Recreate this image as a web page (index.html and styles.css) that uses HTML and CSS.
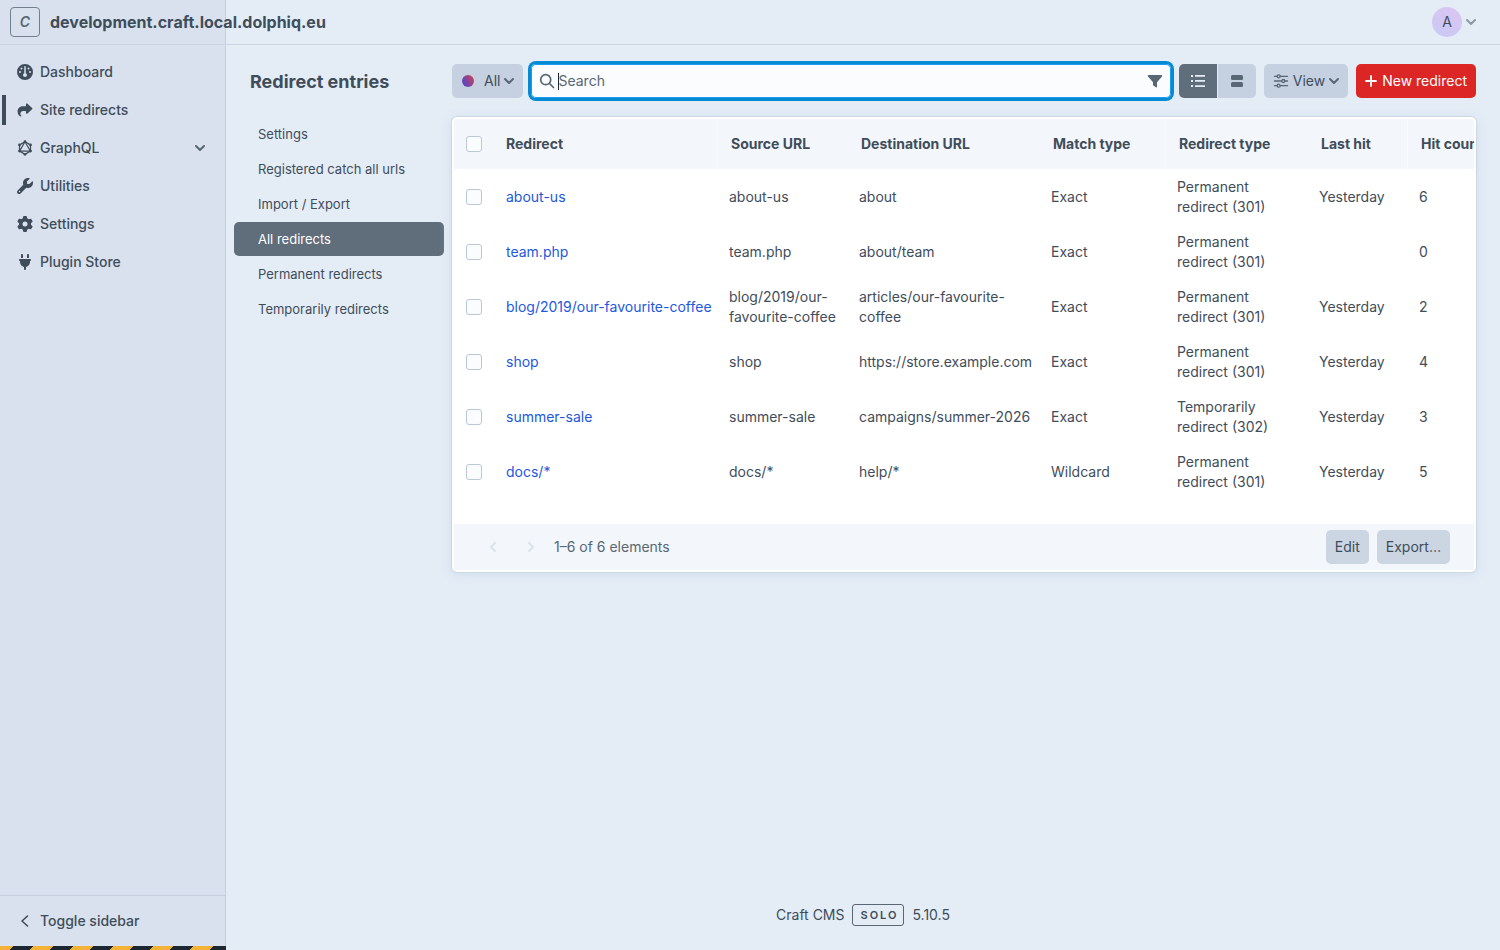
FILE: index.html
```html
<!DOCTYPE html>
<html lang="en">
<head>
<meta charset="utf-8">
<meta name="viewport" content="width=device-width, initial-scale=1">
<title>Redirect entries</title>
<link rel="stylesheet" href="styles.css">
</head>
<body>
<svg class="sprite" aria-hidden="true">
  <symbol id="chevron" viewBox="0 0 10 10"><path d="M1 3l4 4 4-4" fill="none" stroke="currentColor" stroke-width="2" stroke-linecap="round" stroke-linejoin="round"/></symbol>
</svg>
<div class="app">
  <header class="topbar">
    <a class="site" href="#"><span class="site-icon">C</span><span class="site-name">development.craft.local.dolphiq.eu</span></a>
    <button class="account" type="button" aria-label="My account"><span class="avatar">A</span><svg class="chev"><use href="#chevron"/></svg></button>
  </header>

  <div class="sidebar">
    <nav class="nav" aria-label="Primary">
      <a class="nav-item" href="#"><svg class="nav-icon" viewBox="0 0 512 512"><path d="M0 256a256 256 0 1 1 512 0A256 256 0 1 1 0 256zm320 96c0-26.900-16.500-49.900-40-59.300V88c0-13.300-10.700-24-24-24s-24 10.700-24 24V292.700c-23.500 9.500-40 32.500-40 59.300c0 35.300 28.700 64 64 64s64-28.700 64-64zM144 176a32 32 0 1 0 0-64 32 32 0 1 0 0 64zm-16 80a32 32 0 1 0 -64 0 32 32 0 1 0 64 0zm288 32a32 32 0 1 0 0-64 32 32 0 1 0 0 64zM400 144a32 32 0 1 0 -64 0 32 32 0 1 0 64 0z"/></svg>Dashboard</a>
      <a class="nav-item current" href="#" aria-current="page"><svg class="nav-icon" viewBox="-18 -20 548 552"><path d="M307 34.800c-11.500 5.100-19 16.600-19 29.200v64H176C78.800 128 0 206.800 0 304C0 417.300 81.500 467.900 100.200 478.100c2.500 1.400 5.300 1.900 8.100 1.900c10.900 0 19.700-8.900 19.700-19.700c0-7.500-4.300-14.400-9.800-19.500C108.800 431.900 96 414.400 96 384c0-53 43-96 96-96h96v64c0 12.600 7.400 24.100 19 29.200s25 3 34.400-5.400l160-144c6.700-6.100 10.600-14.700 10.600-23.800s-3.800-17.700-10.600-23.800l-160-144c-9.400-8.500-22.900-10.600-34.400-5.400z"/></svg>Site redirects</a>
      <a class="nav-item" href="#"><svg class="nav-icon" viewBox="0 0 16 16"><g fill="none" stroke="currentColor" stroke-width="1.200"><path d="M8 1.700l5.500 3.200v6.200L8 14.300 2.500 11.100V4.900z"/><path d="M8 1.700l5.500 9.400h-11z"/></g><circle cx="8" cy="1.700" r="1.400"/><circle cx="13.500" cy="4.900" r="1.400"/><circle cx="13.500" cy="11.100" r="1.400"/><circle cx="8" cy="14.300" r="1.400"/><circle cx="2.500" cy="11.100" r="1.400"/><circle cx="2.500" cy="4.900" r="1.400"/></svg>GraphQL<svg class="chev"><use href="#chevron"/></svg></a>
      <a class="nav-item" href="#"><svg class="nav-icon" viewBox="0 0 512 512"><path d="M352 320c88.400 0 160-71.600 160-160c0-15.300-2.200-30.100-6.200-44.200c-3.100-10.800-16.400-13.200-24.300-5.300l-76.800 76.800c-3 3-7.100 4.700-11.300 4.700H336c-8.800 0-16-7.200-16-16V118.600c0-4.200 1.700-8.300 4.700-11.300l76.800-76.800c7.900-7.900 5.400-21.200-5.300-24.300C382.100 2.200 367.300 0 352 0C263.600 0 192 71.600 192 160c0 19.100 3.400 37.500 9.500 54.500L19.900 396.100C7.200 408.800 0 426.100 0 444.100C0 481.600 30.400 512 67.900 512c18 0 35.300-7.200 48-19.900L297.500 310.500c17 6.200 35.400 9.500 54.500 9.500zM80 408a24 24 0 1 1 0 48 24 24 0 1 1 0-48z"/></svg>Utilities</a>
      <a class="nav-item" href="#"><svg class="nav-icon" viewBox="0 0 512 512"><path d="M495.900 166.600c3.200 8.700 .5 18.400-6.400 24.600l-43.300 39.400c1.100 8.300 1.700 16.800 1.700 25.400s-.6 17.100-1.700 25.400l43.300 39.400c6.900 6.200 9.600 15.900 6.400 24.600c-4.400 11.900-9.700 23.300-15.800 34.300l-4.700 8.100c-6.600 11-14 21.400-22.100 31.200c-5.900 7.200-15.700 9.600-24.500 6.800l-55.700-17.700c-13.400 10.300-28.200 18.900-44 25.400l-12.500 57.100c-2 9.100-9 16.300-18.200 17.800c-13.800 2.300-28 3.500-42.500 3.500s-28.700-1.200-42.500-3.500c-9.200-1.500-16.200-8.700-18.200-17.800l-12.500-57.100c-15.800-6.500-30.600-15.100-44-25.400L83.100 425.900c-8.800 2.800-18.600 .3-24.500-6.800c-8.100-9.800-15.500-20.200-22.100-31.200l-4.700-8.100c-6.100-11-11.400-22.400-15.800-34.300c-3.200-8.700-.5-18.400 6.400-24.600l43.300-39.400C64.600 273.100 64 264.600 64 256s.6-17.100 1.700-25.400L22.400 191.200c-6.900-6.200-9.600-15.900-6.400-24.600c4.400-11.900 9.700-23.300 15.800-34.300l4.700-8.100c6.600-11 14-21.400 22.100-31.200c5.900-7.200 15.700-9.600 24.500-6.800l55.700 17.700c13.400-10.300 28.200-18.900 44-25.400l12.500-57.100c2-9.100 9-16.300 18.200-17.800C227.300 1.200 241.500 0 256 0s28.700 1.200 42.500 3.500c9.200 1.500 16.200 8.700 18.200 17.800l12.500 57.100c15.800 6.500 30.600 15.100 44 25.400l55.700-17.700c8.800-2.800 18.600-.3 24.500 6.800c8.100 9.800 15.500 20.200 22.100 31.200l4.700 8.100c6.100 11 11.400 22.400 15.800 34.300zM256 336a80 80 0 1 0 0-160 80 80 0 1 0 0 160z"/></svg>Settings</a>
      <a class="nav-item" href="#"><svg class="nav-icon" viewBox="-64 0 512 512"><path d="M96 0C78.300 0 64 14.300 64 32v96h64V32c0-17.700-14.300-32-32-32zM288 0c-17.700 0-32 14.300-32 32v96h64V32c0-17.700-14.300-32-32-32zM32 160c-17.700 0-32 14.300-32 32s14.300 32 32 32v32c0 77.400 55 142 128 156.800V480c0 17.700 14.300 32 32 32s32-14.300 32-32V412.800C297 398 352 333.400 352 256V224c17.700 0 32-14.300 32-32s-14.300-32-32-32H32z"/></svg>Plugin Store</a>
    </nav>
    <button class="toggle" type="button"><svg class="nav-icon" viewBox="0 0 16 16"><path d="M10.500 3L5 8l5.500 5" fill="none" stroke="currentColor" stroke-width="1.600" stroke-linecap="round" stroke-linejoin="round"/></svg>Toggle sidebar</button>
    <div class="dev-stripes"></div>
  </div>

  <div class="page">
    <div class="content">
      <div class="sources">
        <h1 class="title">Redirect entries</h1>
        <nav class="source-list" aria-label="Sources">
          <a class="source" href="#">Settings</a>
          <a class="source" href="#">Registered catch all urls</a>
          <a class="source" href="#">Import / Export</a>
          <a class="source selected" href="#" aria-current="true">All redirects</a>
          <a class="source" href="#">Permanent redirects</a>
          <a class="source" href="#">Temporarily redirects</a>
        </nav>
      </div>

      <main class="main">
        <div class="toolbar">
          <button class="btn status" type="button"><span class="status-dot"></span>All<svg class="chev"><use href="#chevron"/></svg></button>
          <div class="search">
            <svg class="search-icon" viewBox="0 0 16 16"><g fill="none" stroke="currentColor" stroke-width="1.700" stroke-linecap="round"><circle cx="6.700" cy="6.700" r="5"/><path d="M10.500 10.500l4 4"/></g></svg>
            <span class="caret"></span>
            <input class="search-input" type="text" placeholder="Search" aria-label="Search">
            <button class="filter" type="button" aria-label="Filter"><svg viewBox="0 0 16 16"><path d="M1.700 2h12.600c.9 0 1.200.9.700 1.500L10 9.300v4.500c0 .6-.6.9-1.100.5L6.300 12.500A.9.900 0 0 1 6 11.800V9.300L1 3.500C.5 2.900.8 2 1.700 2z"/></svg></button>
          </div>
          <div class="modes">
            <button class="mode active" type="button" aria-label="Display in a table"><svg viewBox="0 0 16 16"><path d="M1 2h2v2H1zM1 7h2v2H1zM1 12h2v2H1zM5 2h10v1.700H5zM5 7.100h10v1.700H5zM5 12.200h10v1.700H5z"/></svg></button>
            <button class="mode" type="button" aria-label="Display as cards"><svg viewBox="0 0 16 16"><rect x="2" y="2" width="12" height="5" rx="1.500"/><rect x="2" y="9" width="12" height="5" rx="1.500"/></svg></button>
          </div>
          <button class="btn view" type="button"><svg class="sliders" viewBox="0 0 16 16"><g fill="none" stroke="currentColor" stroke-width="1.300" stroke-linecap="round"><path d="M1.500 3.300H4M7.400 3.300h7.100M1.500 8h7.100M12 8h2.500M1.500 12.700H4M7.400 12.700h7.100"/><circle cx="5.700" cy="3.300" r="1.500"/><circle cx="10.300" cy="8" r="1.500"/><circle cx="5.700" cy="12.700" r="1.500"/></g></svg>View<svg class="chev"><use href="#chevron"/></svg></button>
          <button class="btn submit" type="button"><svg class="plus" viewBox="0 0 12 12"><path d="M6 1v10M1 6h10" stroke="currentColor" stroke-width="1.800" stroke-linecap="round"/></svg>New redirect</button>
        </div>

        <section class="pane">
          <div class="table-scroll">
            <table class="table">
              <colgroup><col class="c-check"><col class="c-title"><col class="c-source"><col class="c-dest"><col class="c-match"><col class="c-type"><col class="c-last"><col class="c-count"></colgroup>
              <thead>
                <tr><th class="check"><input type="checkbox" aria-label="Select all"></th><th class="first" scope="col">Redirect</th><th class="ruled" scope="col">Source URL</th><th scope="col">Destination URL</th><th scope="col">Match type</th><th class="ruled" scope="col">Redirect type</th><th scope="col">Last hit</th><th class="ruled" scope="col">Hit count</th></tr>
              </thead>
              <tbody>
                <tr><td class="check"><input type="checkbox" aria-label="Select about-us"></td><td><a href="#">about-us</a></td><td>about-us</td><td>about</td><td>Exact</td><td>Permanent redirect (301)</td><td>Yesterday</td><td>6</td></tr>
                <tr><td class="check"><input type="checkbox" aria-label="Select team.php"></td><td><a href="#">team.php</a></td><td>team.php</td><td>about/team</td><td>Exact</td><td>Permanent redirect (301)</td><td></td><td>0</td></tr>
                <tr><td class="check"><input type="checkbox" aria-label="Select blog/2019/our-favourite-coffee"></td><td class="nowrap"><a href="#">blog/2019/our-favourite-coffee</a></td><td>blog/2019/our-favourite-coffee</td><td>articles/our-favourite-coffee</td><td>Exact</td><td>Permanent redirect (301)</td><td>Yesterday</td><td>2</td></tr>
                <tr><td class="check"><input type="checkbox" aria-label="Select shop"></td><td><a href="#">shop</a></td><td>shop</td><td>https://store.example.com</td><td>Exact</td><td>Permanent redirect (301)</td><td>Yesterday</td><td>4</td></tr>
                <tr><td class="check"><input type="checkbox" aria-label="Select summer-sale"></td><td><a href="#">summer-sale</a></td><td>summer-sale</td><td>campaigns/summer-2026</td><td>Exact</td><td>Temporarily redirect (302)</td><td>Yesterday</td><td>3</td></tr>
                <tr><td class="check"><input type="checkbox" aria-label="Select docs/*"></td><td><a href="#">docs/*</a></td><td>docs/*</td><td>help/*</td><td>Wildcard</td><td>Permanent redirect (301)</td><td>Yesterday</td><td>5</td></tr>
              </tbody>
            </table>
          </div>
          <div class="pane-footer">
            <button class="pager prev" type="button" disabled aria-label="Previous page"><svg class="chev"><use href="#chevron"/></svg></button>
            <button class="pager next" type="button" disabled aria-label="Next page"><svg class="chev"><use href="#chevron"/></svg></button>
            <span class="count">1–6 of 6 elements</span>
            <button class="btn soft" type="button">Edit</button>
            <button class="btn soft" type="button">Export…</button>
          </div>
        </section>
      </main>
    </div>
    <footer class="footer"><span>Craft CMS</span><span class="edition">SOLO</span><span>5.10.5</span></footer>
  </div>
</div>
</body>
</html>
```
FILE: styles.css
```css
*, *::before, *::after { box-sizing: border-box; }

body {
  margin: 0;
  background: #e4ecf6;
  color: #3f4d5a;
  font: 14px/20px Inter, "Liberation Sans", sans-serif;
}

a { color: inherit; text-decoration: none; }
button, input { font: inherit; color: inherit; margin: 0; }
button { border: 0; padding: 0; background: none; cursor: pointer; }
svg { flex: none; fill: currentColor; }
.sprite { display: none; }
.chev { width: 10px; height: 10px; color: #596673; }

.app {
  display: grid;
  grid-template: 45px 1fr / 226px minmax(0, 1fr);
  min-height: 100vh;
}

/* Top bar */
.topbar {
  grid-area: 1 / 1 / 2 / 3;
  z-index: 1;
  display: flex;
  align-items: center;
  justify-content: space-between;
  padding: 0 24px 0 10px;
  border-bottom: 1px solid #c9d5e3;
}
.site { display: flex; align-items: center; gap: 10px; }
.site-icon {
  display: grid;
  place-items: center;
  width: 30px;
  height: 30px;
  border: 1px solid #71808e;
  border-radius: 4px;
  color: #596673;
  font-size: 14px;
  font-style: italic;
  font-weight: 600;
}
.site-name { font-size: 16px; font-weight: 700; }
.account { display: flex; align-items: center; gap: 4px; }
.account .chev { color: #8d99a6; }
.avatar {
  display: grid;
  place-items: center;
  width: 30px;
  height: 30px;
  border-radius: 50%;
  background: linear-gradient(20deg, #c9c9f6, #dcc5f1);
}

/* Sidebar */
.sidebar {
  grid-area: 1 / 1 / 3 / 2;
  display: flex;
  flex-direction: column;
  padding-top: 53px;
  background: #d8e1ed;
  border-right: 1px solid #c4d0df;
}
.nav { flex: 1; }
.nav-item, .toggle {
  display: flex;
  align-items: center;
  gap: 7px;
  width: 100%;
  height: 38px;
  padding: 0 20px 0 17px;
  font-weight: 500;
}
.nav-icon { width: 16px; height: 16px; }
.nav-item .chev { margin-left: auto; }
.current { background: linear-gradient(#3f4d5a, #3f4d5a) 2px center / 4px 30px no-repeat; }
.toggle { height: 51px; border-top: 1px solid #c4d0df; }
.dev-stripes {
  height: 4px;
  margin-right: -1px;
  background: linear-gradient(135deg, #f4b236 30%, #1c2731 30% 76%, #f4b236 76%) 0 0 / 40px 4px;
}

/* Page */
.page { grid-area: 2 / 2; display: flex; flex-direction: column; }
.content {
  flex: 1;
  display: grid;
  grid-template-columns: 210px minmax(0, 1fr);
  gap: 8px;
  padding: 19px 24px 24px 8px;
}
.title {
  margin: 0 0 17px;
  padding-left: 16px;
  font-size: 18px;
  line-height: 36px;
  font-weight: 700;
}
.source-list { display: grid; gap: 1px; }
.source {
  padding: 7px 24px;
  border-radius: 5px;
  font-size: 13px;
}
.selected { background: #606d7a; color: #fff; }

/* Toolbar */
.toolbar { display: flex; gap: 8px; margin-bottom: 19px; }
.btn {
  display: flex;
  align-items: center;
  height: 34px;
  padding: 0 9px;
  border-radius: 5px;
  background: #c5d1e1;
  white-space: nowrap;
}
.btn .chev { margin-left: 4px; }
.status { padding-left: 10px; }
.status-dot {
  width: 12px;
  height: 12px;
  margin-right: 10px;
  border-radius: 50%;
  background: linear-gradient(60deg, #3b48dd, #d8414c);
}
.search {
  flex: 1;
  display: flex;
  align-items: center;
  height: 34px;
  padding: 0 8px;
  border-radius: 5px;
  background: #fbfcfe;
  box-shadow: inset 0 0 0 1px #1d9bf0, 0 0 0 3px #058bd3;
}
.search-icon { width: 16px; height: 16px; color: #596673; }
.caret { width: 1px; height: 17px; margin: 0 -1px 0 3px; background: #1c2731; }
.search-input {
  flex: 1;
  min-width: 0;
  padding: 0;
  border: 0;
  outline: 0;
  background: none;
}
.search-input::placeholder { color: #596673; opacity: 1; }
.filter, .filter svg { display: block; width: 16px; height: 16px; color: #596673; }
.modes { display: flex; gap: 1px; }
.mode {
  display: grid;
  place-items: center;
  width: 38px;
  height: 34px;
  border-radius: 0 5px 5px 0;
  background: #c5d1e1;
  color: #596673;
}
.mode svg { width: 16px; height: 16px; }
.mode.active { border-radius: 5px 0 0 5px; background: #606d7a; color: #e4ecf6; }
.sliders { width: 16px; height: 16px; margin-right: 4px; color: #596673; }
.submit { background: #dc2626; color: #fff; }
.plus { width: 12px; height: 12px; margin-right: 5px; }

/* Element index */
.pane {
  padding: 2px;
  border-radius: 5px;
  background: #fff;
  box-shadow: 0 0 0 1px #cdd8e5, 0 2px 12px #cddcea;
}
.table-scroll { overflow-x: auto; scrollbar-width: none; padding-bottom: 25px; border-radius: 4px; }
.table { width: 1073px; table-layout: fixed; border-collapse: separate; border-spacing: 0; }
.c-check { width: 40px; }
.c-title { width: 223px; }
.c-source { width: 130px; }
.c-dest { width: 192px; }
.c-match { width: 126px; }
.c-type { width: 142px; }
.c-last { width: 100px; }
.c-count { width: 120px; }
th {
  height: 50px;
  padding: 0 14px;
  background: #f3f6fb;
  font-weight: 700;
  text-align: left;
  white-space: nowrap;
}
th.first { padding-left: 12px; }
.ruled { box-shadow: inset 1px 0 #fbfcfe; }
td { height: 55px; padding: 8px 8px 7px 12px; }
.nowrap { white-space: nowrap; }
td a { color: #1d58e0; }
th.check, td.check { padding: 0 12px; }
.check input {
  appearance: none;
  display: block;
  width: 16px;
  height: 16px;
  border: 1px solid #b9c7d9;
  border-radius: 3px;
  background: #fbfcfe;
}

.pane-footer {
  display: flex;
  align-items: center;
  gap: 8px;
  height: 46px;
  padding: 0 24px;
  background: #f3f6fb;
  color: #596673;
}
.pager { display: grid; place-items: center; width: 30px; height: 30px; }
.pager .chev { color: #dde3ea; }
.prev .chev { transform: rotate(90deg); }
.next .chev { transform: rotate(-90deg); }
.count { margin: 0 auto 0 0; }
.soft { background: #ccd6e3; color: #3f4d5a; }

.footer {
  display: flex;
  align-items: center;
  justify-content: center;
  gap: 8px;
  padding: 24px;
}
.edition {
  padding: 0 5px 0 7px;
  border: 1px solid #596673;
  border-radius: 3px;
  font-size: 11px;
  font-weight: 600;
  letter-spacing: 2px;
}
```
